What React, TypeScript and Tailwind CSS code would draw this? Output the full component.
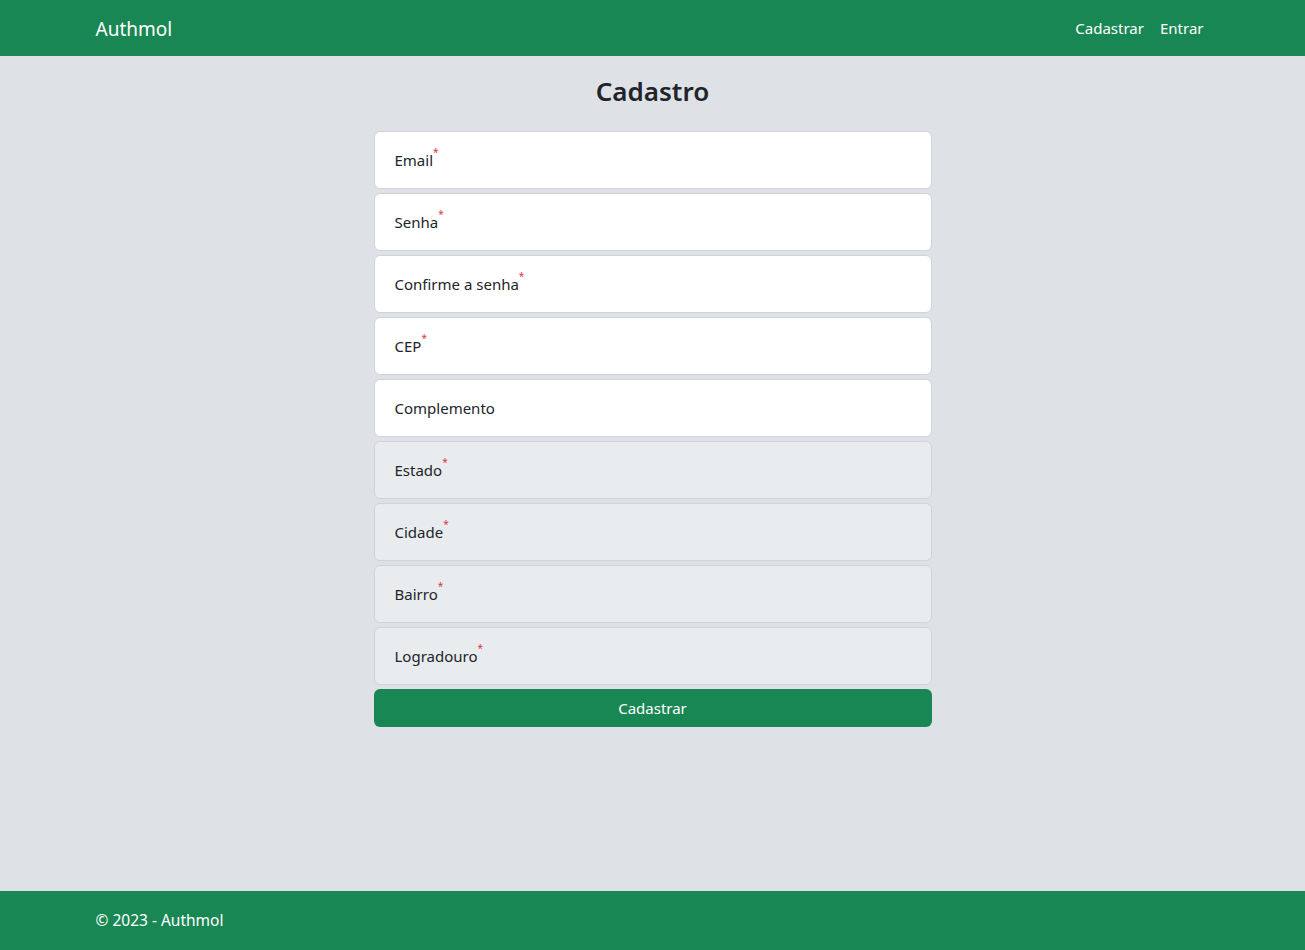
import React from "react";

const fields: { label: string; required: boolean; disabled: boolean }[] = [
  { label: "Email", required: true, disabled: false },
  { label: "Senha", required: true, disabled: false },
  { label: "Confirme a senha", required: true, disabled: false },
  { label: "CEP", required: true, disabled: false },
  { label: "Complemento", required: false, disabled: false },
  { label: "Estado", required: true, disabled: true },
  { label: "Cidade", required: true, disabled: true },
  { label: "Bairro", required: true, disabled: true },
  { label: "Logradouro", required: true, disabled: true },
];

export default function App() {
  return (
    <div
      className="min-h-screen flex flex-col bg-[#dee2e6] text-[#212529]"
      style={{ fontFamily: '"Noto Sans", "Open Sans", sans-serif' }}
    >
      <nav className="h-[56px] bg-[#198754] shrink-0">
        <div className="w-[1140px] mx-auto px-3 h-full flex items-center justify-between">
          <span className="text-[19px] text-white relative top-[1px] left-[1px]">Authmol</span>
          <div className="flex items-center">
            <a className="px-2 text-[15px] text-white">Cadastrar</a>
            <a className="pl-[8px] pr-[7px] text-[15px] text-white">Entrar</a>
          </div>
        </div>
      </nav>
      <main className="flex-1 flex flex-col items-center pt-[18px]">
        <h3 className="text-[26px] leading-[34px] font-semibold mb-[23px]">Cadastro</h3>
        <form className="w-[558px] flex flex-col gap-[4px]">
          {fields.map((f) => (
            <div
              key={f.label}
              className={`h-[58px] border border-[#ced4da] rounded-[6px] flex items-center pl-[20px] ${
                f.disabled ? "bg-[#e9ecef]" : "bg-white"
              }`}
            >
              <span className="text-[15px] leading-[20px] inline-flex">
                {f.label}
                {f.required && (
                  <span className="text-[#dc3545] text-[10px] leading-none relative -top-[3px]">
                    *
                  </span>
                )}
              </span>
            </div>
          ))}
          <button
            type="button"
            className="h-[38px] bg-[#198754] text-white text-[15px] rounded-[6px]"
          >
            Cadastrar
          </button>
        </form>
      </main>
      <footer className="h-[59px] bg-[#198754] shrink-0">
        <div className="w-[1140px] mx-auto px-3 h-full flex items-center">
          <span className="text-[15.5px] text-white relative left-[1px]">© 2023 - Authmol</span>
        </div>
      </footer>
    </div>
  );
}
